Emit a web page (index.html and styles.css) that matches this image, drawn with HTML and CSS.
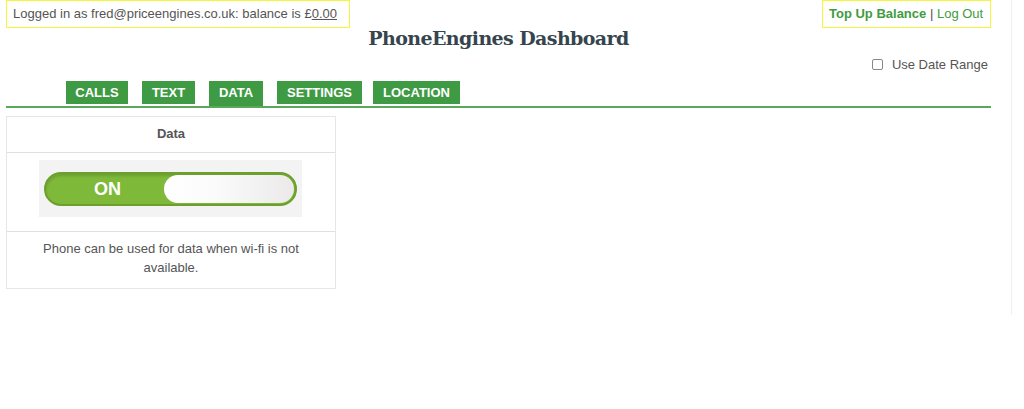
FILE: index.html
```html
<!DOCTYPE html>
<html>
<head>
<meta charset="utf-8">
<link rel="stylesheet" href="styles.css">
</head>
<body>
<div class="page">
  <div class="topbar">
    <div class="userbox">Logged in as fred@priceengines.co.uk: balance is £<a class="bal" href="#">0.00</a></div>
    <div class="actions"><a class="topup" href="#">Top Up Balance</a> <span class="sep">|</span> <a class="logout" href="#">Log Out</a></div>
  </div>
  <h1 class="title">PhoneEngines Dashboard</h1>
  <div class="daterow"><label class="datelabel"><span class="cb"></span>Use Date Range</label></div>
  <nav class="tabs">
    <a class="tab tab-calls" href="#">CALLS</a>
    <a class="tab tab-text" href="#">TEXT</a>
    <a class="tab tab-data active" href="#">DATA</a>
    <a class="tab tab-settings" href="#">SETTINGS</a>
    <a class="tab tab-location" href="#">LOCATION</a>
  </nav>
  <div class="card">
    <div class="card-head">Data</div>
    <div class="card-body">
      <div class="toggle-wrap">
        <div class="toggle">
          <span class="on">ON</span>
          <span class="knob"></span>
        </div>
      </div>
    </div>
    <div class="card-foot">Phone can be used for data when wi-fi is not available.</div>
  </div>
</div>
</body>
</html>
```
FILE: styles.css
```css
* { box-sizing: border-box; }
html, body { margin: 0; padding: 0; background: #fff; }
body { font-family: "Liberation Sans", Arial, sans-serif; font-size: 13px; color: #555; }
.page {
  width: 1012px;
  height: 315px;
  padding: 0 20px 0 6px;
  border-right: 1px solid #f0f0f0;
}
.topbar { display: flex; justify-content: space-between; height: 28px; }
.userbox, .actions {
  border: 1px solid #f5f53a;
  height: 28px;
  line-height: 26px;
  padding: 0 6px;
  font-size: 13px;
}
.userbox { width: 344px; }
.bal { color: #555; text-decoration: underline; }
.actions { width: 169px; padding: 0 6px; }
.topup { color: #3f9c3f; font-weight: bold; text-decoration: none; }
.sep { color: #555; }
.logout { color: #3f9c3f; text-decoration: none; }
.title {
  margin: -2px 0 0;
  text-align: center;
  font-family: "DejaVu Serif", serif;
  font-weight: bold;
  font-size: 19px;
  line-height: 24px;
  color: #36454d;
  letter-spacing: -0.6px;
}
.daterow { display: flex; justify-content: flex-end; height: 28px; padding-right: 3px; }
.datelabel { display: flex; align-items: center; font-size: 13px; color: #555; }
.cb {
  width: 11px; height: 11px;
  border: 1px solid #888;
  border-radius: 2px;
  margin-right: 9px;
  margin-top: 1px;
}
.tabs {
  display: flex;
  gap: 14px;
  padding-left: 60px;
  margin-top: 3px;
  border-bottom: 2px solid #5aa85a;
  height: 27px;
}
.tab {
  display: block;
  background: #3f9a44;
  color: #fff;
  font-weight: bold;
  font-size: 13px;
  text-decoration: none;
  height: 23px;
  line-height: 23px;
  text-align: center;
}
.tab-calls { width: 62px; }
.tab-text { width: 53px; }
.tab-data { width: 54px; }
.tab-settings { width: 85px; margin-right: -3px; }
.tab-location { width: 87px; }
.tab.active { height: 25px; }
.card {
  width: 330px;
  margin-top: 8px;
  border: 1px solid #e6e6e6;
}
.card-head {
  height: 36px;
  line-height: 34px;
  text-align: center;
  font-weight: bold;
  color: #555;
  border-bottom: 1px solid #e0e0e0;
}
.card-body { height: 79px; padding: 7px 0 0 32px; border-bottom: 1px solid #e0e0e0; }
.toggle-wrap {
  width: 263px;
  height: 57px;
  background: #f3f3f3;
  padding: 12px 0 0 5px;
}
.toggle {
  position: relative;
  width: 253px;
  height: 34px;
  border-radius: 17px;
  background: #7fb93a;
  border: 2px solid #6c9f2c;
  box-shadow: inset 0 2px 3px rgba(0,0,0,0.15);
}
.on {
  position: absolute;
  left: 48px;
  top: 0;
  line-height: 30px;
  color: #fff;
  font-weight: bold;
  font-size: 18px;
}
.knob {
  position: absolute;
  right: 1px;
  top: 1px;
  width: 130px;
  height: 28px;
  border-radius: 14px;
  background: linear-gradient(90deg, #ffffff 0%, #fbfbfb 40%, #ebe9e9 100%);
}
.card-foot {
  padding: 7px 20px 11px;
  text-align: center;
  line-height: 19px;
  color: #555;
}
```
